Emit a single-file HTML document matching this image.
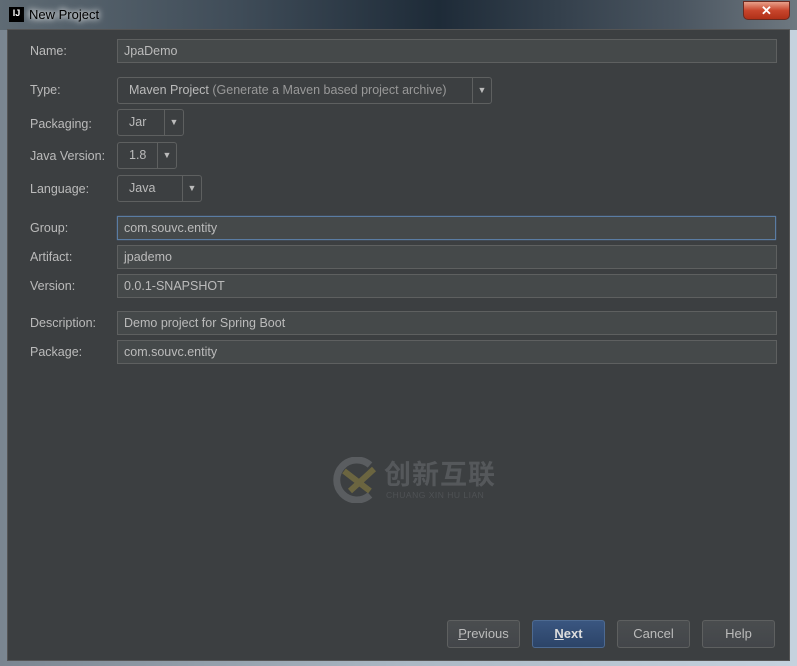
<!DOCTYPE html>
<html><head><meta charset="utf-8"><style>
*{margin:0;padding:0;box-sizing:border-box}
body{width:797px;height:666px;overflow:hidden;background:#c9d6e3;font-family:"Liberation Sans","Noto Sans CJK SC",sans-serif;position:relative}
.title{position:absolute;left:0;top:0;width:797px;height:30px;background:linear-gradient(90deg,#5f6b74 0%,#3f4c58 30%,#1e2b38 55%,#4a5560 85%,#6e7880 100%)}
.title span{position:absolute;left:29px;top:7px;color:#000;font-size:13px;text-shadow:0 0 6px #fff,0 0 8px #fff}
.ij{position:absolute;left:9px;top:7px;width:15px;height:15px;background:#000;color:#fff;font-size:9px;font-weight:bold;line-height:13px;text-align:center}
.close{position:absolute;left:743px;top:1px;width:47px;height:19px;border:1px solid #6b2a20;border-radius:0 0 5px 5px;background:linear-gradient(#e8a08a,#c8452c 50%,#b03018);color:#fff;font-weight:bold;font-size:13px;text-align:center;line-height:17px}
.frame{position:absolute;left:0;top:30px;width:797px;height:636px;background:linear-gradient(90deg,#7a8590,#aab7c3 50%,#c5d2de)}
.content{position:absolute;left:7px;top:29px;width:783px;height:632px;background:#3c3f41;border:1px solid #555}
.lbl{position:absolute;left:30px;color:#bbbbbb;font-size:12.5px}
.f{position:absolute;left:117px;height:24px;border:1px solid #5e6060;background:#45494a;color:#bbb;font-size:12.5px;line-height:22px;padding-left:6px}
.c{position:absolute;left:117px;height:27px;border:1px solid #5e6060;border-radius:3px;background:#3c3f41;color:#bbb;font-size:12.5px;line-height:25px;padding-left:11px}
.c .ar{position:absolute;right:0;top:0;width:19px;height:25px;border-left:1px solid #5e6060;color:#bbb;font-size:9px;text-align:center;line-height:25px}
.b{position:absolute;top:620px;width:73px;height:28px;border:1px solid #5e6060;border-radius:3px;background:linear-gradient(#4a4d4f,#43464a);color:#bbb;font-size:13px;text-align:center;line-height:26px}
</style></head><body>
<div class="frame"></div>
<div class="title"><div class="ij">IJ</div><span>New Project</span></div>
<div class="close">✕</div>
<div class="content"></div>
<div class="lbl" style="top:44px">Name:</div>
<div class="f" style="top:39px;width:660px">JpaDemo</div>
<div class="lbl" style="top:83px">Type:</div>
<div class="c" style="top:77px;width:375px">Maven Project <span style="color:#999">(Generate a Maven based project archive)</span><div class="ar">▼</div></div>
<div class="lbl" style="top:117px">Packaging:</div>
<div class="c" style="top:109px;width:67px">Jar<div class="ar">▼</div></div>
<div class="lbl" style="top:149px">Java Version:</div>
<div class="c" style="top:142px;width:60px">1.8<div class="ar">▼</div></div>
<div class="lbl" style="top:182px">Language:</div>
<div class="c" style="top:175px;width:85px">Java<div class="ar">▼</div></div>
<div class="lbl" style="top:221px">Group:</div>
<div class="f" style="top:216px;width:659px;border:1px solid #5a7ca3;box-shadow:0 0 1px #5a7ca3">com.souvc.entity</div>
<div class="lbl" style="top:250px">Artifact:</div>
<div class="f" style="top:245px;width:660px">jpademo</div>
<div class="lbl" style="top:279px">Version:</div>
<div class="f" style="top:274px;width:660px">0.0.1-SNAPSHOT</div>
<div class="lbl" style="top:316px">Description:</div>
<div class="f" style="top:311px;width:660px">Demo project for Spring Boot</div>
<div class="lbl" style="top:345px">Package:</div>
<div class="f" style="top:340px;width:660px">com.souvc.entity</div>
<svg style="position:absolute;left:330px;top:457px" width="50" height="46"><path d="M40 8 A20 20 0 1 0 40 38" stroke="#5a5d60" stroke-width="7" fill="none"/><path d="M14 14 L40 34 M20 34 L44 12" stroke="#6b6540" stroke-width="6"/></svg>
<div style="position:absolute;left:384px;top:460px;color:#55585b;font-size:27px;font-weight:bold;letter-spacing:1px;line-height:30px">创新互联</div>
<div style="position:absolute;left:386px;top:490px;color:#4f5255;font-size:8.5px;letter-spacing:0.5px">CHUANG XIN HU LIAN</div>
<div class="b" style="left:447px"><u>P</u>revious</div>
<div class="b" style="left:532px;background:linear-gradient(#3a5680,#2c4468);border-color:#4d6a92;color:#ddd;font-weight:bold"><u>N</u>ext</div>
<div class="b" style="left:617px">Cancel</div>
<div class="b" style="left:702px">Help</div>
</body></html>
